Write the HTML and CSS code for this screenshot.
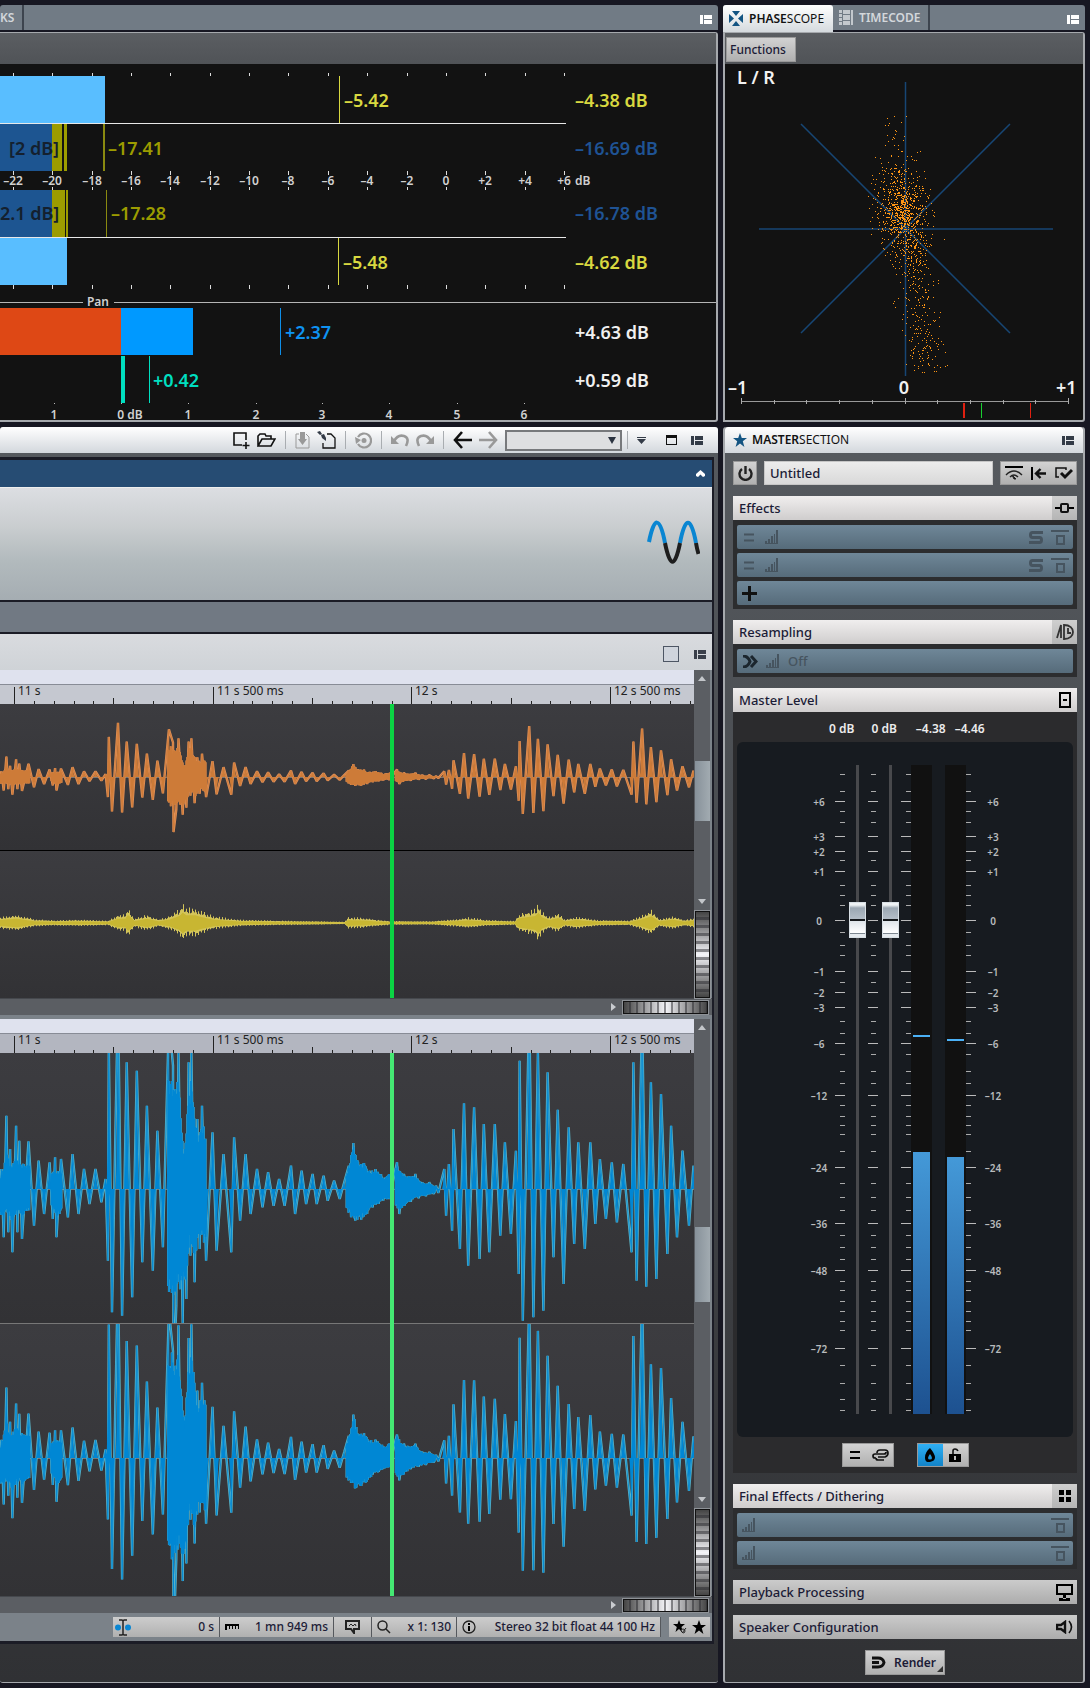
FILE: index.html
```html
<!DOCTYPE html>
<html lang="en">
<head>
  <meta charset="UTF-8">
  <title>Audio Workspace</title>
  <link rel="stylesheet" href="styles.css">
</head>
<body>
<svg class="defs" aria-hidden="true">
  <symbol id="i-layout" viewBox="0 0 12 9"><path d="M0 0h3v9H0zM4 0h8v4H4zM4 5h8v4H4z"/></symbol>
  <symbol id="i-bars" viewBox="0 0 14 14"><path d="M0 11h2v3H0zM3 9h2v5H3zM6 6h2v8H6zM9 4h1v10H9zM11 0h2v14h-2zM0 13h13v1H0z"/></symbol>
  <symbol id="i-bypass" viewBox="0 0 18 15"><path d="M0 0h18v2H0zM5 5h9v10H5zM7 7v6h5V7z" fill-rule="evenodd"/></symbol>
  <symbol id="i-equal" viewBox="0 0 10 8"><path d="M0 0h10v2H0zM0 6h10v2H0z"/></symbol>
  <symbol id="i-solo" viewBox="0 0 14 13"><path d="M14 1.500H3.500Q1.500 1.500 1.500 4T3.500 6.500H10.500Q12.500 6.500 12.500 9T10.500 11.500H0" fill="none" stroke="currentColor" stroke-width="3"/></symbol>
</svg>

<main class="desk">
  <section class="panel">
    <div class="tabs">
      <button class="tab cut">KS</button>
      <span class="fill"></span>
      <button class="tool" aria-label="Layout"><svg width="12" height="9"><use href="#i-layout"/></svg></button>
    </div>
    <div class="body">
      <div class="strip"></div>
      <svg class="levels" id="levels" width="716" height="356"></svg>
    </div>
  </section>

  <section class="panel">
    <div class="tabs">
      <button class="tab active">
        <svg width="14" height="15" viewBox="0 0 14 15"><path d="M3 0h8L7 5zM3 15h8L7 10zM0 3v9l5-4.500zM14 3v9L9 7.500z"/></svg>
        <span><b>PHASE</b>SCOPE</span>
      </button>
      <button class="tab">
        <svg width="14" height="15" viewBox="0 0 14 15"><path d="M0 0h3v3H0zM0 4h3v3H0zM0 8h3v3H0zM0 12h3v3H0zM4 0h7v4H4zM4 5h7v5H4zM4 11h7v4H4zM12 0h2v15h-2z"/></svg>
        <span><b>TIMECODE</b></span>
      </button>
      <span class="fill"></span>
      <button class="tool" aria-label="Layout"><svg width="12" height="9"><use href="#i-layout"/></svg></button>
    </div>
    <div class="body">
      <div class="strip"><button class="btn">Functions</button></div>
      <svg class="scope" id="scope" width="358" height="356"></svg>
    </div>
  </section>

  <section class="window">
    <header class="toolbar">
      <button class="tool" aria-label="New"><svg width="17" height="17" viewBox="0 0 17 17"><path d="M13 8V1H1v12h8M13 10v7M9.500 13.500h7" fill="none" stroke="#111" stroke-width="1.600"/></svg></button>
      <button class="tool" aria-label="Open"><svg width="19" height="15" viewBox="0 0 19 15"><path d="M1 13V3l2-2h5l1 2h5v3M1 13l4-7h13l-4 7z" fill="none" stroke="#111" stroke-width="1.600"/></svg></button>
      <i class="sep"></i>
      <button class="tool off" aria-label="Save"><svg width="15" height="17" viewBox="0 0 15 17"><path d="M4 2H1v14h13V5l-3-3" fill="none" stroke="#999"/><path d="M5 0h5v7h2l-4.500 6L3 7h2z" fill="#999"/></svg></button>
      <button class="tool" aria-label="Save as"><svg width="19" height="18" viewBox="0 0 19 18"><path d="M10 3h4l4 4v10H6v-5" fill="none" stroke="#111" stroke-width="1.300"/><path d="M0 1l3-1 2 3-2 1zM4 4l3-1 2 4v3L5 7z"/></svg></button>
      <i class="sep"></i>
      <button class="tool off" aria-label="Refresh"><svg width="17" height="17" viewBox="0 0 17 17"><path d="M3 5a7 7 0 1 1 0 7" fill="none" stroke="#999" stroke-width="2.200"/><circle cx="9" cy="8.500" r="2.500" fill="#999"/><path d="M0 5l6 3-5 4z" fill="#999"/></svg></button>
      <i class="sep"></i>
      <button class="tool off" aria-label="Undo"><svg width="18" height="14" viewBox="0 0 18 14"><path d="M3 8Q7 1 13 3t2 10" fill="none" stroke="#999" stroke-width="2.600"/><path d="M0 3v8h8z" fill="#999"/></svg></button>
      <button class="tool off" aria-label="Redo"><svg width="18" height="14" viewBox="0 0 18 14"><path d="M15 8Q11 1 5 3t-2 10" fill="none" stroke="#999" stroke-width="2.600"/><path d="M18 3v8h-8z" fill="#999"/></svg></button>
      <i class="sep"></i>
      <button class="tool" aria-label="Back"><svg width="19" height="18" viewBox="0 0 19 18"><path d="M9 1L2 9l7 8M2 9h17" fill="none" stroke="#111" stroke-width="2.600"/></svg></button>
      <button class="tool off" aria-label="Forward"><svg width="19" height="18" viewBox="0 0 19 18"><path d="M10 1l7 8-7 8M17 9H0" fill="none" stroke="#999" stroke-width="2.600"/></svg></button>
      <span class="drop"><select aria-label="Location"><option></option></select></span>
      <i class="sep"></i>
      <button class="tool" aria-label="More"><svg width="9" height="7" viewBox="0 0 9 7"><path d="M0 0h9v1H0zM0 2h9L4.500 7z"/></svg></button>
      <button class="tool win" aria-label="Maximize"><svg width="11" height="10" viewBox="0 0 11 10"><path d="M0 0h11v10H0zM1 3v6h9V3z" fill-rule="evenodd"/></svg></button>
      <button class="tool" aria-label="Layout"><svg width="12" height="9"><use href="#i-layout"/></svg></button>
    </header>

    <div class="editor">
      <div class="titlebar"><svg width="9" height="7" viewBox="0 0 9 7"><path d="M0 6V4l4.500-4L9 4v2l-2 1-2.500-2.500L2 7z" fill="#fff"/></svg></div>
      <div class="ribbon">
        <svg width="53" height="44" viewBox="0 0 53 44" fill="none" stroke-width="4">
          <path d="M2 22C7-4 13-4 18 23M33 23C38-4 44-4 49 23" stroke="#0a86d2"/>
          <path d="M18 23c5 25 10 25 15 0M49 23q1 6 2.500 11" stroke="#1d1d1d"/>
        </svg>
      </div>
      <div class="spacer"></div>
      <div class="docbar">
        <input type="checkbox" aria-label="Show overview">
        <svg width="12" height="9" fill="#3a3f4a"><use href="#i-layout"/></svg>
      </div>

      <div class="pane">
        <div class="waves">
          <div class="band"></div>
          <svg class="ruler" width="694" height="20"></svg>
          <svg class="track" id="clip-a" width="694" height="146"></svg>
          <svg class="track next dark" id="clip-b" width="694" height="147"></svg>
          <i class="cursor"></i>
        </div>
        <div class="vscroll"><i class="up"></i><i class="thumb"></i><i class="down"></i><i class="wheel"></i></div>
      </div>
      <div class="hscroll"><i class="right"></i><i class="wheel"></i></div>

      <div class="pane second">
        <div class="waves">
          <div class="band"></div>
          <svg class="ruler" width="694" height="20"></svg>
          <svg class="track" id="chan-l" width="694" height="270"></svg>
          <svg class="track next" id="chan-r" width="694" height="272"></svg>
          <i class="cursor bright"></i>
        </div>
        <div class="vscroll"><i class="up"></i><i class="thumb"></i><i class="down"></i><i class="wheel"></i></div>
      </div>
      <div class="hscroll"><i class="right"></i><i class="wheel"></i></div>

      <footer class="status">
        <button class="seg pos"><svg width="16" height="17" viewBox="0 0 16 17"><circle cx="3" cy="8.500" r="3" fill="#0a86d2"/><circle cx="13" cy="8.500" r="3" fill="#0a86d2"/><path d="M4 1h3l1 1 1-1h3M4 16h3l1-1 1 1h3M8 2v13" fill="none" stroke="#222" stroke-width="1.500"/></svg><span>0 s</span></button>
        <button class="seg len"><svg width="14" height="7" viewBox="0 0 14 7"><path d="M0 0h14v5h-1V2h-2v3h-1V2H8v3H7V2H5v3H4V2H2v4H0z"/></svg><span>1 mn 949 ms</span></button>
        <button class="seg note" aria-label="Comment"><svg width="15" height="14" viewBox="0 0 15 14"><path d="M1 1h13v8H9v4L6 9H1z" fill="none" stroke="#222" stroke-width="2"/><path d="M4 6l2-2 2 2 2-2 1 2" fill="none" stroke="#222"/></svg></button>
        <button class="seg zoom"><svg width="14" height="14" viewBox="0 0 14 14"><path d="M9 9l4 4M10 5.500a4.500 4.500 0 1 1-9 0 4.500 4.500 0 0 1 9 0z" fill="none" stroke="#222" stroke-width="1.500"/></svg><span>x 1: 130</span></button>
        <button class="seg fmt"><svg width="14" height="14" viewBox="0 0 14 14"><circle cx="7" cy="7" r="6" fill="none" stroke="#222" stroke-width="1.300"/><path d="M6 3h2v2H6zM6 6h2v5H6z"/></svg><span>Stereo 32 bit float 44 100 Hz</span></button>
        <button class="seg stars" aria-label="Favorites">
          <svg width="14" height="14" viewBox="0 0 14 14"><path d="M6 0l1.500 4H12L8.500 7 9 9l-1 2-2-2-3.500 3 1.300-5L0 4h4.500z"/><path d="M8 11a2 2 0 1 1 2 2zM9 13l4-5" fill="none" stroke="#222"/></svg>
          <svg width="14" height="14" viewBox="0 0 14 14"><path d="M7 0l1.800 5H14L9.800 8.300 11.400 14 7 10.600 2.600 14l1.600-5.700L0 5h5.200z"/></svg>
        </button>
      </footer>
    </div>
  </section>

  <section class="window master">
    <header class="toolbar">
      <svg width="14" height="14" viewBox="0 0 14 14"><path d="M7 0l1.800 5H14L9.800 8.300 11.400 14 7 10.600 2.600 14l1.600-5.700L0 5h5.200z" fill="#135482"/></svg>
      <h2><b>MASTER</b>SECTION</h2>
      <button class="tool" aria-label="Layout"><svg width="12" height="9"><use href="#i-layout"/></svg></button>
    </header>

    <div class="stack">
      <div class="preset">
        <button class="btn sq" aria-label="Power"><svg width="15" height="15" viewBox="0 0 15 15"><path d="M4 3a6 6 0 1 0 7 0M7.500 0v8" fill="none" stroke="#222" stroke-width="2.400"/></svg></button>
        <input type="text" value="Untitled" aria-label="Preset name">
        <div class="btn group">
          <button aria-label="Bypass master section"><svg width="18" height="14" viewBox="0 0 18 14"><path d="M0 0h18v2H0z"/><path d="M1 9q8-8 16 0M5 11q4-4 8 0" fill="none" stroke="#222" stroke-width="1.400"/><path d="M7 9l4 4h-2z" stroke="#222"/></svg></button>
          <button aria-label="Reset"><svg width="15" height="13" viewBox="0 0 15 13"><path d="M0 0h2v13H0z"/><path d="M15 6.500H6M9.500 2L5 6.500 9.500 11" fill="none" stroke="#111" stroke-width="2.400"/></svg></button>
          <button aria-label="Apply"><svg width="18" height="13" viewBox="0 0 18 13"><path d="M11 3V1H1v9h3" fill="none" stroke="#111" stroke-width="1.500"/><path d="M6 6l4 4 7-7" fill="none" stroke="#111" stroke-width="3"/></svg></button>
        </div>
      </div>

      <section class="block">
        <div class="head"><h3>Effects</h3><button class="opt" aria-label="Effects"><svg width="19" height="10" viewBox="0 0 19 10"><path d="M0 4h5v2H0zM14 4h5v2h-5z"/><rect x="6" y="1" width="7" height="8" rx="1" fill="none" stroke="#111" stroke-width="2"/></svg></button></div>
        <div class="slots">
          <div class="slot"><svg width="10" height="9"><use href="#i-equal"/></svg><svg width="14" height="14"><use href="#i-bars"/></svg><span></span><svg width="14" height="13"><use href="#i-solo"/></svg><svg width="18" height="15"><use href="#i-bypass"/></svg></div>
          <div class="slot"><svg width="10" height="9"><use href="#i-equal"/></svg><svg width="14" height="14"><use href="#i-bars"/></svg><span></span><svg width="14" height="13"><use href="#i-solo"/></svg><svg width="18" height="15"><use href="#i-bypass"/></svg></div>
          <button class="slot add" aria-label="Add effect"><svg width="15" height="15" viewBox="0 0 15 15"><path d="M6 0h3v15H6zM0 6h15v3H0z"/></svg></button>
        </div>
      </section>

      <section class="block">
        <div class="head"><h3>Resampling</h3><button class="opt" aria-label="Resampling"><svg width="18" height="16" viewBox="0 0 18 16"><path d="M1 14L5 1v13M8 1c12 0 12 14 0 14zM12 4v5h3" fill="none" stroke="#333" stroke-width="1.800"/></svg></button></div>
        <div class="slots">
          <div class="slot re"><svg width="16" height="13" viewBox="0 0 16 13"><path d="M1 1q5 0 7 5.500Q6 12 1 12M9 1l5 5.500L9 12" fill="none" stroke="#1c262e" stroke-width="3"/></svg><svg width="14" height="14"><use href="#i-bars"/></svg><span>Off</span></div>
        </div>
      </section>

      <section class="block">
        <div class="head"><h3>Master Level</h3><button class="opt clear" aria-label="Master level"><svg width="12" height="16" viewBox="0 0 12 16"><path d="M0 0h12v16H0zM2 2v12h8V2zM4 7h4v2H4z" fill-rule="evenodd"/></svg></button></div>
        <div class="mixer">
          <div class="readout"><span>0 dB</span><span>0 dB</span><span>–4.38</span><span>–4.46</span></div>
          <div class="desk-face">
            <div class="desk-in">
              <svg id="meters" width="336" height="695"></svg>
              <input class="fader" type="range" min="0" max="1000" value="777" aria-label="Left fader">
              <input class="fader two" type="range" min="0" max="1000" value="777" aria-label="Right fader">
            </div>
          </div>
          <div class="links">
            <div class="btn group">
              <button aria-label="Unlink"><svg width="10" height="8"><use href="#i-equal"/></svg></button>
              <button aria-label="Link"><svg width="17" height="12" viewBox="0 0 17 12"><path d="M4 9H3Q1 9 1 7t2-2h9q2 0 2-2M5 4q0-3 3-3h5q3 0 3 3t-3 4H6M4 9q0 2 2 2h6" fill="none" stroke="#111" stroke-width="1.700"/></svg></button>
            </div>
            <div class="btn group">
              <button class="on" aria-label="Fluid"><svg width="10" height="14" viewBox="0 0 10 14"><path d="M5 0q5 6 5 9.500T5 14 0 9.500 5 0zm0 6Q3 8.500 3 10t2 1.500T7 10 5 6z" fill-rule="evenodd"/></svg></button>
              <button aria-label="Lock"><svg width="12" height="14" viewBox="0 0 12 14"><path d="M0 6h12v8H0zM5 8v4h2V8z" fill-rule="evenodd"/><path d="M4 6V3q0-2 2-2t3 2" fill="none" stroke="#111" stroke-width="1.600"/></svg></button>
            </div>
          </div>
        </div>
      </section>

      <section class="block">
        <div class="head"><h3>Final Effects / Dithering</h3><button class="opt" aria-label="Dithering"><svg width="12" height="12" viewBox="0 0 12 12"><path d="M0 0h5v5H0zM7 0h5v5H7zM0 7h5v5H0zM7 7h5v5H7z"/></svg></button></div>
        <div class="slots">
          <div class="slot fin"><svg width="14" height="14"><use href="#i-bars"/></svg><span></span><svg width="18" height="15"><use href="#i-bypass"/></svg></div>
          <div class="slot fin"><svg width="14" height="14"><use href="#i-bars"/></svg><span></span><svg width="18" height="15"><use href="#i-bypass"/></svg></div>
        </div>
      </section>

      <div class="head gray"><h3>Playback Processing</h3><button class="opt clear" aria-label="Playback"><svg width="17" height="17" viewBox="0 0 17 17"><path d="M0 0h17v11H0zM2 2v7h13V2zM7 11h3v4H7zM3 14h11v3H3z" fill-rule="evenodd"/></svg></button></div>
      <div class="head gray"><h3>Speaker Configuration</h3><button class="opt clear" aria-label="Speakers"><svg width="18" height="14" viewBox="0 0 18 14"><path d="M1 5h4l4-3v10L5 9H1z" fill="none" stroke="#111" stroke-width="2.400"/><path d="M13 1q5 6 0 12" fill="none" stroke="#111" stroke-width="1.600"/></svg></button></div>
      <button class="btn render"><svg width="15" height="13" viewBox="0 0 15 13"><path d="M1 2h6q5 0 6 4.500Q12 11 7 11H1M1 6.500h7" fill="none" stroke="#111" stroke-width="3"/></svg>Render</button>
    </div>
  </section>
</main>
<script src="script.js"></script>
</body>
</html>
```
FILE: styles.css
```css
* {
  box-sizing: border-box;
}

body {
  margin: 0;
  background: #171722;
  font-family: "Noto Sans", "Open Sans", sans-serif;
  font-size: 13px;
  line-height: 16px;
  color: #1b1b36;
}

button, input, select {
  font: inherit;
  color: inherit;
}

button {
  margin: 0;
  padding: 0;
  border: 0;
  background: none;
}

h2, h3 {
  margin: 0;
  font-size: 13px;
  font-weight: 500;
}

svg {
  display: block;
  flex: none;
}

.defs {
  position: absolute;
  width: 0;
  height: 0;
}

.fill {
  flex: 1;
}

.desk {
  display: grid;
  grid-template-columns: minmax(0, 1fr) 362px;
  gap: 5px;
  padding: 5px 5px 5px 0;
}

/* top panels */
.panel {
  min-width: 0;
}

.tabs {
  display: flex;
  height: 25px;
  margin-bottom: 2px;
  background: #717b85;
  border-radius: 3px 3px 0 0;
}

.tabs .tool {
  padding: 4px 6px 0;
  color: #fff;
}

.tool {
  display: flex;
  align-items: center;
}

.tool svg {
  fill: currentColor;
}

.tab {
  display: flex;
  align-items: center;
  gap: 6px;
  padding: 0 7px 0 6px;
  border-right: 2px solid #3d444e;
  color: #d3d7db;
  font-size: 12px;
}

.tab svg {
  fill: #c3c8cd;
}

.tab b {
  font-weight: 600;
}

.tab.cut {
  padding: 0 8px 0 0;
  font-weight: 600;
}

.tab.active {
  height: 27px;
  padding-right: 9px;
  border: 0;
  border-radius: 3px 3px 0 0;
  background: linear-gradient(#fff, #d5dade);
  color: #111;
}

.tab.active svg {
  fill: #135482;
}

.body {
  border: 1px solid #a6a9ad;
  border-width: 1px 2px 2px 0;
  border-radius: 0 3px 3px 0;
  background: #121212;
}

.panel + .panel .body {
  border-left-width: 2px;
}

.strip {
  height: 31px;
  padding: 4px 0 0 1px;
  background: linear-gradient(#5b5e62, #505357);
}

.btn {
  border: 1px solid #999;
  background: linear-gradient(#d2d2d2, #b0b0b0);
}

.strip .btn {
  width: 70px;
  height: 25px;
  padding-right: 6px;
  font-size: 12px;
  font-weight: 500;
}

.levels, .scope, .ruler {
  overflow: visible;
}

svg text {
  font-family: "Noto Sans", "Open Sans", sans-serif;
}

.levels .big {
  font-size: 18px;
  font-weight: 600;
}

.levels .small {
  font-size: 12px;
  font-weight: 600;
  fill: #d0d0d0;
}

.mid {
  text-anchor: middle;
}

.scope text {
  font-size: 18px;
  font-weight: 600;
  fill: #f2f2f2;
}

/* windows */
.window {
  min-width: 0;
  border-radius: 3px;
  border-bottom: 1px solid #a6a9ad;
  background: linear-gradient(#565a5f, #303134);
}

.window .toolbar {
  display: flex;
  align-items: center;
  justify-content: flex-end;
  height: 26px;
  padding-right: 15px;
  border-radius: 3px 3px 0 0;
  background: linear-gradient(#fff, #d3d8dd);
}

.toolbar .tool {
  margin-right: 7px;
  color: #333b47;
}

.toolbar .tool:last-child {
  margin-right: 0;
}

.toolbar .win {
  margin: 0 14px 0 13px;
  color: #111;
}

.sep {
  width: 1px;
  height: 18px;
  margin: 0 9px 0 2px;
  background: #a9adb1;
}

.drop {
  position: relative;
  margin-right: 3px;
}

.drop select {
  display: block;
  width: 117px;
  height: 21px;
  appearance: none;
  border: 2px solid #77797c;
  background: #dedfe1;
}

.drop::after {
  content: "";
  position: absolute;
  right: 6px;
  top: 7px;
  border: 4px solid transparent;
  border-top: 7px solid #2b3340;
  border-bottom: 0;
}

.editor {
  margin: 4px 4px 38px 0;
  border: solid #1b1c26;
  border-width: 3px 2px 3px 0;
  background: #7b8289;
}

.titlebar {
  display: flex;
  justify-content: flex-end;
  height: 27px;
  padding: 10px 7px;
  background: #264c73;
}

.ribbon {
  display: flex;
  align-items: center;
  justify-content: flex-end;
  height: 115px;
  padding-right: 12px;
  padding-bottom: 4px;
  border-top: 1px solid #eee;
  border-bottom: 2px solid #1b1c26;
  background: linear-gradient(#dcdee2, #c9cdcf 35%, #b2babd 65%, #a5adb2);
}

.spacer {
  height: 32px;
  border-bottom: 2px solid #1b1c26;
  background: #717983;
}

.docbar {
  display: flex;
  align-items: center;
  justify-content: flex-end;
  gap: 15px;
  height: 36px;
  padding: 4px 6px 0;
  background: linear-gradient(#d9dbdf, #cfd3d7);
}

.docbar input {
  width: 16px;
  height: 16px;
  margin: 0;
  appearance: none;
  border: 1px solid #4d5664;
  background: #cfd4dc;
}

.pane {
  display: flex;
  padding-right: 2px;
}

.waves {
  position: relative;
  flex: 1;
  min-width: 0;
  overflow: hidden;
}

.band {
  height: 14px;
  background: #dfe2ee;
}

.ruler {
  background: #c5c8d0;
  border-top: 1px solid #888c96;
}

.second .ruler {
  background: #b3b6c0;
}

.ruler text {
  font-size: 12px;
  fill: #222;
}

.track {
  background: linear-gradient(#3c3c40, #323235);
}

.next {
  box-sizing: content-box;
  border-top: 1px solid #777;
}

.dark {
  border-color: #000;
}

.cursor {
  position: absolute;
  top: 34px;
  bottom: 0;
  left: 390px;
  width: 4px;
  background: #0bd343;
}

.bright {
  background: #45e873;
}

.vscroll {
  display: flex;
  flex-direction: column;
  align-items: center;
  width: 16px;
  background: #5b5e63;
}

.up, .down, .right {
  border: 4px solid transparent;
}

.up {
  margin-top: 2px;
  border-bottom: 5px solid #c3c6ca;
}

.down {
  margin: auto 0 3px;
  border-top: 5px solid #c3c6ca;
}

.thumb {
  width: 15px;
  height: 60px;
  margin-top: 80px;
  background: linear-gradient(90deg, #87919a, #a2abb1);
}

.second .thumb {
  height: 75px;
  margin-top: 197px;
}

.wheel {
  width: 15px;
  height: 87px;
  border: 1px solid #111;
  outline: 1px solid #8e9297;
  background: repeating-linear-gradient(transparent 0 5px, rgba(40, 40, 45, 0.5) 5px 8px), linear-gradient(#444, #f4f4f8 50%, #444);
}

.hscroll {
  display: flex;
  align-items: center;
  justify-content: flex-end;
  height: 17px;
  margin-bottom: 4px;
  padding-right: 4px;
  border-top: 1px solid #45484d;
  background: #5b5e63;
}

.right {
  margin-right: 3px;
  border-left: 5px solid #c9ccd0;
}

.hscroll .wheel {
  width: 85px;
  height: 13px;
  background: repeating-linear-gradient(90deg, transparent 0 5px, rgba(40, 40, 45, 0.5) 5px 7px), linear-gradient(90deg, #444, #f4f4f8 50%, #444);
}

.status {
  display: flex;
  justify-content: flex-end;
  height: 24px;
  padding: 0 2px;
}

.seg {
  display: flex;
  align-items: center;
  justify-content: space-between;
  height: 20px;
  padding: 0 5px;
  border-right: 1px solid #55585d;
  background: linear-gradient(#cdcdcd, #b0b0b0);
  font-size: 12px;
  font-weight: 500;
}

.pos {
  width: 107px;
  padding-left: 2px;
}

.len {
  width: 114px;
}

.note {
  width: 38px;
  padding: 0 11px;
}

.zoom {
  width: 85px;
}

.fmt {
  width: 204px;
}

.stars {
  width: 41px;
  margin-left: 8px;
  padding: 0 4px;
  border: 0;
}

/* master section */
.master {
  border: solid #a6a9ad;
  border-width: 0 2px 1px;
}

.master .toolbar {
  gap: 5px;
  padding: 0 9px 0 8px;
}

.toolbar h2 {
  flex: 1;
  font-size: 12px;
  font-weight: 400;
  color: #111;
}

h2 b {
  font-weight: 600;
}

.stack {
  display: flex;
  flex-direction: column;
  gap: 11px;
  padding: 8px 6px 7px 8px;
}

.preset {
  display: flex;
  gap: 7px;
}

.preset input {
  flex: 1;
  min-width: 0;
  height: 24px;
  padding: 0 5px;
  border: 1px solid #c6c6c6;
  background: linear-gradient(#ececec, #d9d9d9);
  font-weight: 500;
}

.sq {
  display: flex;
  align-items: center;
  justify-content: center;
  width: 24px;
  height: 24px;
}

.group {
  display: flex;
  height: 24px;
}

.group button {
  display: flex;
  align-items: center;
  justify-content: center;
  width: 25px;
}

.head {
  display: flex;
  align-items: center;
  justify-content: space-between;
  height: 24px;
  padding-left: 6px;
  background: linear-gradient(#f0eeee, #cfcdcd);
}

.gray {
  background: linear-gradient(#cbcbcb, #acacac);
}

.opt {
  display: flex;
  align-items: center;
  justify-content: center;
  width: 25px;
  height: 24px;
  background: linear-gradient(#cfcfcf, #b5b5b5);
}

.opt.clear {
  background: none;
}

.slots {
  display: flex;
  flex-direction: column;
  gap: 4px;
  padding: 5px 4px 4px;
  background: #2c2d2f;
}

.slot {
  display: flex;
  align-items: center;
  gap: 11px;
  width: 100%;
  height: 24px;
  padding: 0 4px 0 7px;
  border-radius: 2px;
  background: linear-gradient(#6f8798, #566b7a);
  color: #46545f;
  fill: #46545f;
}

.slot span {
  flex: 1;
}

.slot span + svg {
  margin-right: -3px;
}

.fin {
  padding-left: 5px;
}

.fin span + svg {
  margin-right: 0;
}

.re {
  gap: 8px;
  padding-left: 5px;
  font-weight: 500;
}

.add {
  padding-left: 5px;
  fill: #111;
}

.mixer {
  padding: 9px 4px 6px;
  background: #2b2b2d;
}

.readout {
  display: flex;
  gap: 17px;
  height: 21px;
  padding-left: 92px;
  color: #ececec;
  font-size: 12px;
  font-weight: 600;
}

.readout span + span + span {
  margin-left: 2px;
}

.readout span:last-child {
  margin-left: -8px;
}

.desk-face {
  display: flex;
  justify-content: center;
  border-radius: 6px;
  background: #171b20;
}

.desk-in {
  position: relative;
}

.desk-in text {
  font-size: 10px;
  font-weight: 600;
  fill: #b9bbbd;
}

.fader {
  position: absolute;
  top: 23px;
  left: 112px;
  width: 17px;
  height: 649px;
  margin: 0;
  appearance: none;
  writing-mode: vertical-lr;
  direction: rtl;
  background: linear-gradient(90deg, transparent 7px, #48494c 7px 10px, transparent 10px);
}

.two {
  left: 145px;
}

.fader::-webkit-slider-thumb {
  appearance: none;
  width: 17px;
  height: 36px;
  border: 1px solid #d8dfe4;
  background: linear-gradient(#eef2f4 0 2px, #9ba7b2 5px, #b4bec7 16px, #16191c 16px 18px, #dfe5ea 18px, #fff 30px, #7d8790 30px 31px, #e5eaee 31px);
}

.links {
  display: flex;
  justify-content: center;
  gap: 23px;
  padding-top: 6px;
}

.links .group {
  width: 52px;
}

.links .on {
  background: linear-gradient(#2fb0f5, #1283c8);
}

.render {
  position: relative;
  display: flex;
  align-items: center;
  align-self: center;
  gap: 8px;
  height: 25px;
  padding: 0 8px 0 5px;
  font-size: 12px;
  font-weight: 600;
}

.render::after {
  content: "";
  position: absolute;
  right: 1px;
  bottom: 2px;
  border: 3px solid #333;
  border-top-color: transparent;
  border-left-color: transparent;
}
```
FILE: script.js
```js
var NS = 'http://www.w3.org/2000/svg'

function add (parent, tag, attrs, text) {
  var el = document.createElementNS(NS, tag)
  for (var key in attrs) el.setAttribute(key, attrs[key])
  if (text !== undefined) el.textContent = text
  parent.appendChild(el)
  return el
}

function box (parent, x, y, w, h, fill) {
  return add(parent, 'rect', { x: x, y: y, width: w, height: h, fill: fill })
}

var seed = 7
function rnd () {
  seed = (seed * 16807) % 2147483647
  return seed / 2147483647
}
function bell () {
  return rnd() + rnd() + rnd() + rnd() - 2
}

/* level and pan meters */
function drawLevels () {
  var s = document.getElementById('levels')
  function label (x, y, t, fill) {
    add(s, 'text', { x: x, y: y, fill: fill, 'class': 'big' }, t)
  }
  for (var i = 0; i < 15; i++) {
    var x = Math.round(13 + i * 39.35)
    box(s, x, 9, 1, 3, '#ddd')
    box(s, x, 107, 1, 4, '#ddd')
    box(s, x, 123, 1, 3, '#ddd')
    box(s, x, 221, 1, 4, '#ddd')
    var v = i * 2 - 22
    add(s, 'text', { x: x, y: 121, 'class': 'small mid' }, v > 0 ? '+' + v : String(v).replace('-', '–'))
  }
  add(s, 'text', { x: 575, y: 121, 'class': 'small' }, 'dB')
  box(s, 0, 12, 105, 47, '#59beff')
  box(s, 0, 60, 52, 47, '#1d5591')
  box(s, 52, 60, 10, 47, '#9c9c00')
  box(s, 64, 60, 3, 47, '#9c9c00')
  box(s, 103, 60, 2, 47, '#8a8a10')
  box(s, 0, 126, 52, 47, '#1d5591')
  box(s, 52, 126, 13, 47, '#9c9c00')
  box(s, 66, 126, 2, 47, '#9c9c00')
  box(s, 106, 126, 1, 47, '#8a8a10')
  box(s, 0, 174, 67, 47, '#59beff')
  box(s, 339, 12, 1, 47, '#d8d840')
  box(s, 338, 174, 1, 47, '#d8d840')
  box(s, 0, 59, 566, 1, '#e8e8e8')
  box(s, 0, 173, 566, 1, '#e8e8e8')
  label(344, 43, '–5.42', '#d8d840')
  label(575, 43, '–4.38 dB', '#d8d840')
  label(108, 91, '–17.41', '#9c9c00')
  label(9, 91, '[2 dB]', '#14202e')
  label(575, 91, '–16.69 dB', '#1f5394')
  label(111, 156, '–17.28', '#9c9c00')
  label(0, 156, '2.1 dB]', '#14202e')
  label(575, 156, '–16.78 dB', '#1f5394')
  label(343, 205, '–5.48', '#d8d840')
  label(575, 205, '–4.62 dB', '#d8d840')

  box(s, 0, 238, 83, 1, '#b5b5b5')
  box(s, 114, 238, 602, 1, '#b5b5b5')
  add(s, 'text', { x: 98, y: 242, 'class': 'small mid' }, 'Pan')
  box(s, 0, 244, 121, 47, '#de4815')
  box(s, 121, 244, 72, 47, '#0099ff')
  box(s, 280, 244, 1, 47, '#0e8ee8')
  box(s, 121, 292, 4, 47, '#00dfc0')
  box(s, 149, 292, 1, 47, '#00dfc0')
  label(285, 275, '+2.37', '#0e93f2')
  label(575, 275, '+4.63 dB', '#f0f0f0')
  label(153, 323, '+0.42', '#00dfc0')
  label(575, 323, '+0.59 dB', '#f0f0f0')
  var marks = [[54, '1'], [130, '0 dB'], [188, '1'], [256, '2'], [322, '3'], [389, '4'], [457, '5'], [524, '6']]
  marks.forEach(function (m) {
    box(s, m[0] === 130 ? 121 : m[0], 339, 1, 1, '#bbb')
    add(s, 'text', { x: m[0], y: 355, 'class': 'small mid' }, m[1])
  })
}

function drawScope () {
  var s = document.getElementById('scope')
  var cx = 180.5
  var cy = 165
  add(s, 'path', {
    d: 'M34 165H328M180.5 18V312M76 60L285 269M285 60L76 269',
    stroke: '#174674', 'stroke-width': 1.5, fill: 'none'
  })
  var d = ''
  for (var i = 0; i < 1250; i++) {
    var x, y
    if (i < 120) {
      y = -18 + bell() * 10
      x = -5 + bell() * 9
    } else if (i < 660) {
      y = -16 + bell() * 40
      x = -2 + bell() * 24 + y * 0.12
    } else {
      y = -113 + rnd() * 258
      if (y < -60 && rnd() < 0.65) continue
      x = -14 + (y + 115) * 0.14 + bell() * 18
    }
    d += 'M' + Math.round(cx + x) + ' ' + Math.round(cy + y) + 'h1v1h-1z'
  }
  add(s, 'path', { d: d, fill: '#ff9614' })
  add(s, 'text', { x: 12, y: 20 }, 'L / R')
  add(s, 'text', { x: 3, y: 330 }, '–1')
  add(s, 'text', { x: 179, y: 330, 'class': 'mid' }, '0')
  add(s, 'text', { x: 331, y: 330 }, '+1')
  box(s, 16, 337, 328, 1, '#999')
  for (var t = 0; t < 11; t++) box(s, Math.round(16 + t * 32.7), t % 5 ? 336 : 334, 1, t % 5 ? 4 : 6, '#aaa')
  box(s, 238, 339, 2, 15, '#e02010')
  box(s, 256, 339, 1, 15, '#18d030')
  box(s, 305, 339, 1, 15, '#e02010')
}

function drawRulers () {
  var names = ['11 s', '11 s 500 ms', '12 s', '12 s 500 ms']
  document.querySelectorAll('.ruler').forEach(function (s) {
    for (var i = 0; i < 35; i++) {
      var x = Math.round(14 + i * 19.87)
      var h = i % 10 === 0 ? 17 : i % 5 === 0 ? 6 : 3
      box(s, x, 19 - h, 1, h, '#222')
      if (i % 10 === 0) add(s, 'text', { x: x + 4, y: 10 }, names[i / 10])
    }
  })
}

/* signal extremes as position, amplitude; highs first, then lows */
var highs = [3, 60, 14, 220, 22, 120, 35, 190, 42, 145, 62, 143, 84, 85, 108, 80, 120, 95, 133, 90, 158, 105, 183, 60, 208, 60, 230, 30, 237, 430, 257, 580, 276, 380, 298, 355, 320, 250, 343, 175, 368, 510, 377, 370, 389, 415, 402, 120, 411, 380, 417, 415, 430, 210, 440, 250, 463, 170, 487, 105, 510, 155, 535, 105, 560, 60, 584, 50, 608, 30, 634, 70, 657, 55, 681, 45, 705, 40, 728, 25, 750, 20, 760, 70, 770, 138, 780, 82, 793, 78, 805, 55, 818, 60, 830, 45, 840, 35, 865, 80, 880, 45, 905, 45, 920, 20, 935, 20, 950, 10, 968, 60, 978, 75, 988, 180, 1011, 257, 1033, 245, 1054, 195, 1078, 195, 1100, 140, 1124, 115, 1132, 385, 1153, 545, 1172, 408, 1193, 350, 1215, 238, 1239, 185, 1260, 140, 1286, 140, 1307, 90, 1333, 80, 1358, 75, 1380, 380, 1399, 520, 1418, 320, 1440, 285, 1462, 190, 1487, 115, 1511, 70]
var lows = [8, 145, 18, 130, 27, 190, 38, 130, 48, 150, 74, 110, 96, 75, 115, 90, 123, 145, 148, 85, 171, 75, 195, 45, 221, 40, 235, 215, 244, 370, 266, 380, 288, 325, 310, 220, 333, 245, 355, 175, 378, 590, 384, 350, 398, 405, 406, 330, 415, 200, 424, 280, 435, 180, 449, 215, 472, 185, 504, 190, 523, 95, 546, 75, 572, 55, 596, 50, 620, 50, 643, 75, 667, 45, 690, 45, 714, 35, 740, 30, 765, 85, 774, 95, 787, 92, 800, 75, 812, 55, 825, 45, 835, 35, 848, 30, 870, 75, 895, 38, 912, 28, 928, 22, 945, 15, 955, 12, 972, 80, 985, 125, 1002, 180, 1020, 230, 1045, 210, 1066, 190, 1090, 140, 1113, 135, 1130, 255, 1139, 395, 1162, 385, 1184, 365, 1206, 205, 1228, 285, 1251, 165, 1274, 180, 1297, 105, 1320, 90, 1344, 100, 1376, 190, 1387, 275, 1408, 293, 1430, 270, 1454, 195, 1475, 145, 1501, 110]

/* stretches where the signal closes up into a solid body */
var solid = [[0, 65, 0.55], [112, 135, 0.6], [366, 450, 0.8], [755, 850, 1], [862, 950, 0.9]]

var SX = 694 / 1512

function levelAt (list, x) {
  for (var i = 0; i < list.length - 2; i += 2) {
    if (x <= list[i + 2]) {
      var t = (x - list[i]) / (list[i + 2] - list[i])
      return list[i + 1] + (list[i + 3] - list[i + 1]) * Math.max(0, t)
    }
  }
  return list[list.length - 1]
}

/* one half wave, wide at the zero line and narrow at the tip */
function lobe (x, tip, mid) {
  var w = 2.6
  return 'M' + (x - w).toFixed(1) + ' ' + mid + 'Q' + (x - 1.4).toFixed(1) + ' ' + mid + ' ' + x.toFixed(1) + ' ' + tip.toFixed(1) +
    'Q' + (x + 1.4).toFixed(1) + ' ' + mid + ' ' + (x + w).toFixed(1) + ' ' + mid + 'z'
}

function drawSignal (id, mid, gain, fill, edge, vary) {
  var s = document.getElementById(id)
  var pts = []
  var g = gain / 3
  for (var i = 0; i < highs.length; i += 2) pts.push([highs[i], -highs[i + 1] * (1 - rnd() * vary)])
  for (i = 0; i < lows.length; i += 2) pts.push([lows[i], lows[i + 1] * (1 - rnd() * vary)])
  pts.sort(function (a, b) { return a[0] - b[0] })
  box(s, 0, mid, 694, 1, '#777')
  var line = 'M0 ' + mid
  var lobes = ''
  pts.forEach(function (p) {
    line += 'L' + (p[0] * SX).toFixed(1) + ' ' + (mid + p[1] * g).toFixed(1)
    lobes += lobe(p[0] * SX, mid + p[1] * g, mid)
  })
  var body = ''
  solid.forEach(function (z) {
    for (var x = z[0]; x < z[1]; x += 2) {
      var k = z[2] * (0.8 + rnd() * 0.2)
      var top = Math.min(levelAt(highs, x), 420) * k * g
      var low = Math.min(levelAt(lows, x), 400) * k * g
      body += 'M' + (x * SX).toFixed(1) + ' ' + (mid - top).toFixed(1) + 'V' + (mid + low).toFixed(1)
    }
  })
  add(s, 'path', { d: body, stroke: edge, 'stroke-width': 2, fill: 'none' })
  add(s, 'path', { d: line, stroke: edge, 'stroke-width': 2.4, fill: 'none', 'stroke-linejoin': 'bevel' })
  add(s, 'path', { d: lobes, fill: fill })
  add(s, 'path', { d: line, stroke: fill, 'stroke-width': 0.8, fill: 'none', 'stroke-linejoin': 'bevel' })
  add(s, 'path', { d: body, stroke: fill, 'stroke-width': 1.5, fill: 'none' })
}

var quiet = [0, 18, 35, 26, 75, 10, 120, 7, 165, 9, 235, 6, 255, 25, 272, 26, 278, 48, 292, 12, 320, 25, 345, 10, 370, 22, 390, 42, 397, 62, 405, 46, 425, 46, 440, 34, 465, 20, 520, 9, 600, 6, 700, 4, 750, 2, 757, 17, 790, 15, 820, 9, 850, 5, 940, 4, 1000, 12, 1020, 16, 1060, 8, 1120, 5, 1130, 28, 1165, 42, 1172, 60, 1180, 34, 1195, 18, 1215, 30, 1230, 10, 1255, 18, 1300, 8, 1370, 6, 1395, 20, 1418, 40, 1435, 10, 1465, 20, 1490, 8, 1512, 15]

function drawQuiet () {
  var s = document.getElementById('clip-b')
  var edge = ''
  var core = ''
  for (var x = 0; x < 694; x++) {
    var a = levelAt(quiet, x / SX) / 3
    var k = x % 3 ? 0.75 : 1
    edge += 'M' + (x + 0.5) + ' ' + (72 - a * k * (0.75 + rnd() * 0.25) - 0.5).toFixed(1) + 'V' + (72 + a * k * (0.7 + rnd() * 0.2) + 0.5).toFixed(1)
    core += 'M' + (x + 0.5) + ' ' + (72 - a * 0.5).toFixed(1) + 'V' + (72 + a * 0.5).toFixed(1)
  }
  add(s, 'path', { d: edge, stroke: '#d3c458', fill: 'none' })
  add(s, 'path', { d: core, stroke: '#c8b632', fill: 'none' })
}

/* fader scale and output bars */
function drawMeters () {
  var s = document.getElementById('meters')
  var major = [['+6', 59], ['+3', 94], ['+2', 109], ['+1', 129], ['0', 178], ['–1', 229], ['–2', 250], ['–3', 265], ['–6', 301], ['–12', 353], ['–24', 425], ['–36', 481], ['–48', 528], ['–72', 606]]
  var minor = [32, 49, 69, 80, 118, 143, 153, 163, 190, 203, 213, 240, 279, 291, 312, 329, 341, 363, 374, 383, 392, 409, 441, 455, 468, 493, 505, 517, 539, 548, 559, 569, 579, 588, 623, 641, 657, 668]
  var grad = add(add(s, 'defs', {}), 'linearGradient', { id: 'bar', x1: 0, y1: 0, x2: 0, y2: 1 })
  add(grad, 'stop', { offset: 0, 'stop-color': '#4499d8' })
  add(grad, 'stop', { offset: 1, 'stop-color': '#1d5190' })
  box(s, 174, 23, 21, 649, '#111')
  box(s, 208, 23, 21, 649, '#111')
  box(s, 176, 410, 17, 262, 'url(#bar)')
  box(s, 210, 415, 17, 257, 'url(#bar)')
  box(s, 176, 293, 17, 2, '#4bb0f5')
  box(s, 210, 297, 17, 2, '#4bb0f5')
  minor.forEach(function (y) {
    box(s, 103, y, 5, 1, '#aaa')
    box(s, 134, y, 5, 1, '#aaa')
    box(s, 169, y, 5, 1, '#aaa')
    box(s, 229, y, 5, 1, '#aaa')
  })
  major.forEach(function (m) {
    box(s, 98, m[1], 10, 1, '#bbb')
    box(s, 131, m[1], 10, 1, '#bbb')
    box(s, 164, m[1], 10, 1, '#bbb')
    box(s, 229, m[1], 10, 1, '#bbb')
    add(s, 'text', { x: 82, y: m[1] + 5, 'class': 'mid' }, m[0])
    add(s, 'text', { x: 256, y: m[1] + 5, 'class': 'mid' }, m[0])
  })
}

drawLevels()
drawScope()
drawRulers()
drawSignal('clip-a', 73, 0.28, '#cd7b38', '#e09058', 0)
drawQuiet()
drawSignal('chan-l', 136, 1, '#0087d4', '#5cb4c6', 0)
drawSignal('chan-r', 134, 0.97, '#0087d4', '#5cb4c6', 0.12)
drawMeters()
```
